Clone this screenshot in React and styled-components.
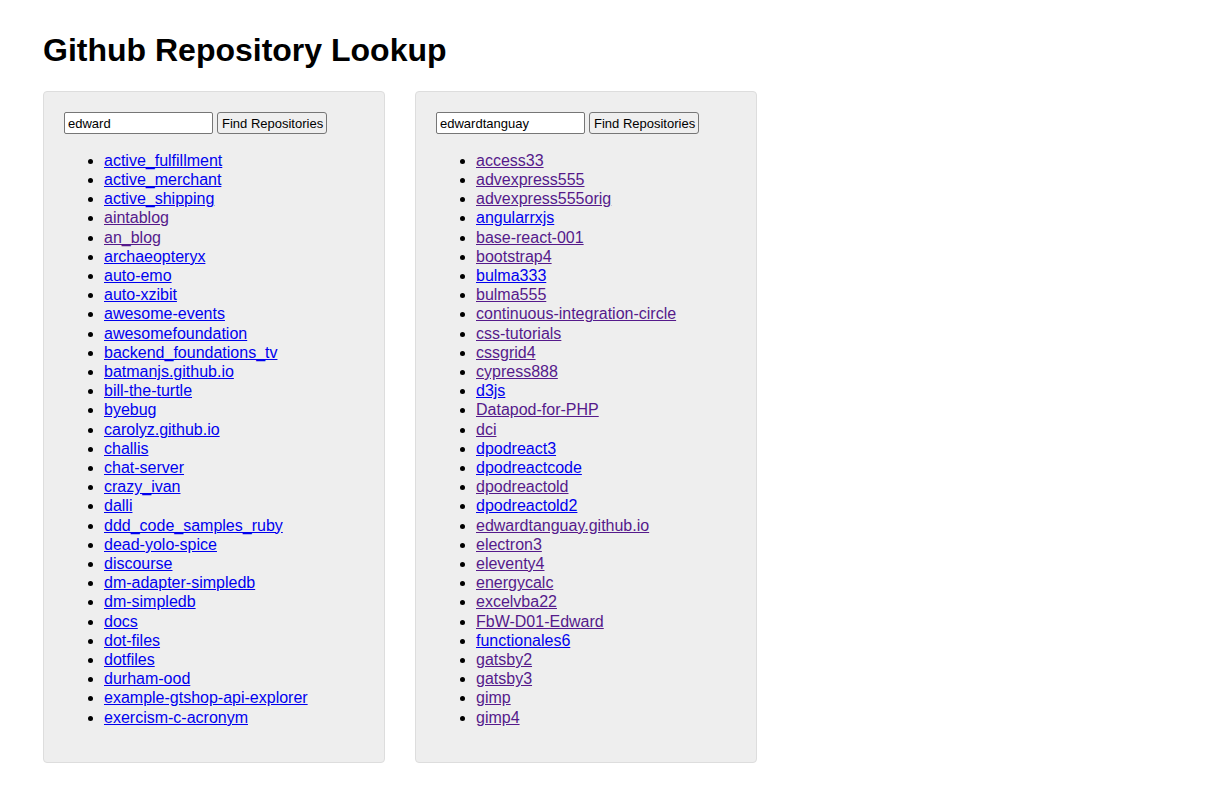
import React from 'react';
import styled, { createGlobalStyle } from 'styled-components';

const GlobalStyle = createGlobalStyle`
  body {
    margin: 0;
    background: #fff;
    font-family: "Liberation Sans", Arial, sans-serif;
    color: #000;
  }
`;

const Page = styled.div`
  padding: 32px 43px;
`;

const Title = styled.h1`
  margin: 0 0 22px;
  font-size: 32px;
  font-weight: bold;
  line-height: 36.8px;
`;

const Panels = styled.div`
  display: flex;
  align-items: flex-start;
  gap: 30px;
`;

const Panel = styled.div`
  box-sizing: border-box;
  width: 342px;
  padding: 20px;
  background: #eeeeee;
  border: 1px solid #dddddd;
  border-radius: 4px;
`;

const SearchRow = styled.form`
  display: flex;
  align-items: center;
  gap: 4px;
  margin: 0;
`;

const SearchInput = styled.input`
  box-sizing: border-box;
  width: 149px;
  height: 22px;
  padding: 2px 3px 0;
  border: 1px solid #767676;
  border-radius: 2px;
  background: #fff;
  font-family: "Liberation Sans", Arial, sans-serif;
  font-size: 13px;
  color: #000;
  outline: none;
`;

const SearchButton = styled.button`
  box-sizing: border-box;
  width: 110px;
  height: 22px;
  padding: 2px 4px 0;
  border: 1px solid #767676;
  border-radius: 3px;
  background: #efefef;
  font-family: "Liberation Sans", Arial, sans-serif;
  font-size: 13px;
  color: #000;
  white-space: nowrap;
`;

const RepoList = styled.ul`
  margin: 17px 0 15px;
  padding-left: 40px;
  font-size: 16px;
  line-height: 19.2px;
`;

const RepoLink = styled.a`
  color: ${(p) => (p.$visited ? '#551a8b' : '#0000ee')};
  text-decoration: underline;
`;

const left = [
  'active_fulfillment', 'active_merchant', 'active_shipping', '*aintablog', '*an_blog',
  'archaeopteryx', 'auto-emo', 'auto-xzibit', 'awesome-events', 'awesomefoundation',
  'backend_foundations_tv', 'batmanjs.github.io', 'bill-the-turtle', 'byebug',
  'carolyz.github.io', 'challis', 'chat-server', 'crazy_ivan', 'dalli',
  'ddd_code_samples_ruby', 'dead-yolo-spice', 'discourse', 'dm-adapter-simpledb',
  'dm-simpledb', 'docs', 'dot-files', 'dotfiles', 'durham-ood',
  'example-gtshop-api-explorer', 'exercism-c-acronym',
];

const right = [
  '*access33', '*advexpress555', '*advexpress555orig', 'angularrxjs', '*base-react-001',
  '*bootstrap4', 'bulma333', '*bulma555', '*continuous-integration-circle',
  '*css-tutorials', '*cssgrid4', '*cypress888', 'd3js', '*Datapod-for-PHP', '*dci',
  'dpodreact3', 'dpodreactcode', '*dpodreactold', 'dpodreactold2',
  '*edwardtanguay.github.io', '*electron3', '*eleventy4', '*energycalc', '*excelvba22',
  '*FbW-D01-Edward', 'functionales6', '*gatsby2', '*gatsby3', '*gimp', '*gimp4',
];

const Lookup = ({ user, repos }) => (
  <Panel>
    <SearchRow onSubmit={(e) => e.preventDefault()}>
      <SearchInput defaultValue={user} />
      <SearchButton type="submit">Find Repositories</SearchButton>
    </SearchRow>
    <RepoList>
      {repos.map((r) => {
        const visited = r.startsWith('*');
        const name = visited ? r.slice(1) : r;
        return (
          <li key={name}>
            <RepoLink href="#" $visited={visited}>{name}</RepoLink>
          </li>
        );
      })}
    </RepoList>
  </Panel>
);

export default function App() {
  return (
    <Page>
      <GlobalStyle />
      <Title>Github Repository Lookup</Title>
      <Panels>
        <Lookup user="edward" repos={left} />
        <Lookup user="edwardtanguay" repos={right} />
      </Panels>
    </Page>
  );
}
